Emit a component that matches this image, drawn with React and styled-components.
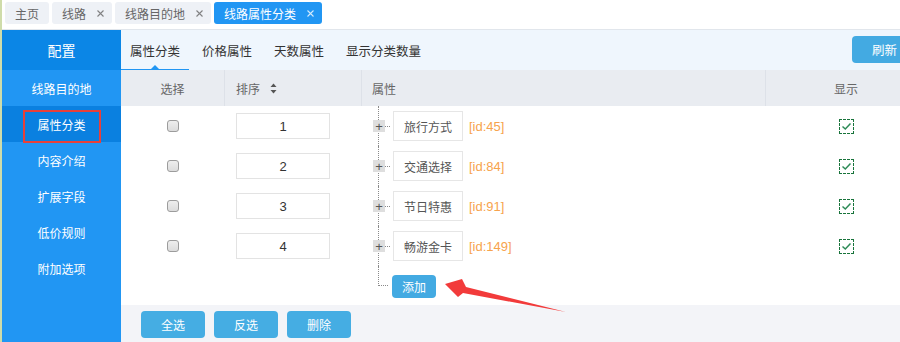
import React from "react";
import styled, { createGlobalStyle } from "styled-components";

const GlobalStyle = createGlobalStyle`
  html, body {
    margin: 0;
    padding: 0;
    background: #fff;
    overflow: hidden;
  }
  body {
    font-family: "Noto Sans CJK SC", "Noto Sans", sans-serif;
    font-size: 12px;
    color: #333;
  }
  * { box-sizing: border-box; }
`;

const tabs = [
  { label: "主页", closable: false },
  { label: "线路", closable: true },
  { label: "线路目的地", closable: true },
  { label: "线路属性分类", closable: true, active: true },
];

const menu = ["线路目的地", "属性分类", "内容介绍", "扩展字段", "低价规则", "附加选项"];
const subTabs = ["属性分类", "价格属性", "天数属性", "显示分类数量"];

const rows = [
  { sort: 1, name: "旅行方式", id: 45 },
  { sort: 2, name: "交通选择", id: 84 },
  { sort: 3, name: "节日特惠", id: 91 },
  { sort: 4, name: "畅游金卡", id: 149 },
];

const App = () => {
  return (
    <Page>
      <GlobalStyle />
      <TabBar>
        {tabs.map((t) => (
          <Tab key={t.label} $active={t.active} $closable={t.closable}>
            {t.label}
            {t.closable && (
              <Close viewBox="0 0 7 7">
                <path d="M0.5 0.5 L6.5 6.5 M6.5 0.5 L0.5 6.5" stroke="currentColor" strokeWidth="1.1" />
              </Close>
            )}
          </Tab>
        ))}
      </TabBar>

      <Body>
        <Sidebar>
          <SideHeader>配置</SideHeader>
          {menu.map((m) => (
            <SideItem key={m} $active={m === "属性分类"}>
              {m === "属性分类" ? <Marked>{m}</Marked> : m}
            </SideItem>
          ))}
        </Sidebar>

        <Main>
          <SubBar>
            {subTabs.map((s, i) => (
              <SubTab key={s} $active={i === 0}>
                {s}
              </SubTab>
            ))}
            <RefreshButton>刷新</RefreshButton>
          </SubBar>

          <Table>
            <HeadCell $center>选择</HeadCell>
            <HeadCell $pad={11}>
              排序
              <SortIcon viewBox="0 0 7 11">
                <path d="M3.5 0.5 L6.5 4 H0.5 Z" fill="#555" />
                <path d="M3.5 10.5 L6.5 7 H0.5 Z" fill="#555" />
              </SortIcon>
            </HeadCell>
            <HeadCell $pad={10}>属性</HeadCell>
            <HeadCell $center $last>
              显示
            </HeadCell>

            {rows.map((r) => (
              <React.Fragment key={r.id}>
                <Cell $center>
                  <Check type="checkbox" />
                </Cell>
                <Cell $pad={11}>
                  <SortInput defaultValue={r.sort} />
                </Cell>
                <TreeCell>
                  <Branch>
                    <PlusBox>+</PlusBox>
                    <Twig />
                    <AttrLabel>{r.name}</AttrLabel>
                    <AttrId>[id:{r.id}]</AttrId>
                  </Branch>
                </TreeCell>
                <Cell $center>
                  <ShowMark>
                    <svg width="11" height="9" viewBox="0 0 11 9">
                      <path d="M1.5 4.5 L4.3 7 L9.5 1.5" fill="none" stroke="#2e8b57" strokeWidth="1.5" />
                    </svg>
                  </ShowMark>
                </Cell>
              </React.Fragment>
            ))}

            <Cell />
            <Cell />
            <AddCell>
              <Elbow />
              <AddButton>添加</AddButton>
            </AddCell>
            <Cell />
          </Table>

          <Footer>
            <FootButton>全选</FootButton>
            <FootButton>反选</FootButton>
            <FootButton>删除</FootButton>
          </Footer>
        </Main>
      </Body>

      <Arrow viewBox="0 0 926 342">
        <polygon
          points="445,284 462,279 466,287 566,312 463,293 458,297"
          fill="#f23b3b"
        />
      </Arrow>
    </Page>
  );
};

const Page = styled.div`
  position: relative;
  width: 926px;
  height: 342px;
  border-left: 2px solid #cfdcaa;
  display: flex;
  flex-direction: column;
`;

const TabBar = styled.div`
  height: 30px;
  display: flex;
  align-items: flex-start;
  gap: 3px;
  padding: 2px 0 0 3px;
  border-bottom: 1px solid #e1e6ec;
`;

const Tab = styled.div`
  height: 22px;
  display: flex;
  align-items: center;
  padding: 0 ${({ $closable }) => ($closable ? 8 : 10)}px 0 10px;
  border-radius: 3px;
  font-size: 12px;
  color: ${({ $active }) => ($active ? "#fff" : "#666")};
  background: ${({ $active }) => ($active ? "#2196f3" : "#eef1f6")};
`;

const Close = styled.svg`
  width: 7px;
  height: 7px;
  margin-left: 11px;
  opacity: 0.8;
`;

const Body = styled.div`
  flex: 1;
  display: flex;
  min-height: 0;
`;

const Sidebar = styled.div`
  width: 119px;
  background: #2196f3;
  display: flex;
  flex-direction: column;
`;

const SideHeader = styled.div`
  height: 40px;
  display: flex;
  align-items: center;
  justify-content: center;
  background: #0b86e6;
  color: #fff;
  font-size: 14px;
`;

const SideItem = styled.div`
  height: 36px;
  display: flex;
  align-items: center;
  justify-content: center;
  color: #fff;
  font-size: 12px;
  background: ${({ $active }) => ($active ? "#0a80e0" : "transparent")};
`;

const Marked = styled.span`
  width: 78px;
  height: 33px;
  margin-top: 4px;
  display: flex;
  align-items: center;
  justify-content: center;
  padding-bottom: 4px;
  border: 2px solid #e8403a;
`;

const Main = styled.div`
  flex: 1;
  display: flex;
  flex-direction: column;
`;

const SubBar = styled.div`
  height: 40px;
  display: flex;
  align-items: stretch;
  gap: 4px;
  background: #eff6fd;
`;

const SubTab = styled.div`
  position: relative;
  display: flex;
  align-items: center;
  padding: 1px 9px 0;
  font-size: 12.5px;
  color: #333;
  border-bottom: 1px solid ${({ $active }) => ($active ? "#2196f3" : "transparent")};

  &::after {
    content: "";
    display: ${({ $active }) => ($active ? "block" : "none")};
    position: absolute;
    left: 50%;
    bottom: 0;
    margin-left: -4px;
    border: 4px solid transparent;
    border-bottom-color: #2196f3;
  }
`;

const RefreshButton = styled.div`
  margin: 6px 12px 7px auto;
  width: 62px;
  display: flex;
  align-items: center;
  padding-left: 20px;
  border-radius: 4px;
  background: #43aae2;
  color: #fff;
  font-size: 12.5px;
`;

const Table = styled.div`
  display: grid;
  grid-template-columns: 104px 137px 404px 1fr;
  grid-template-rows: 36px repeat(4, 40px) 39px;
  background: #fff;
`;

const HeadCell = styled.div`
  display: flex;
  align-items: center;
  justify-content: ${({ $center }) => ($center ? "center" : "flex-start")};
  padding-left: ${({ $pad }) => ($pad || 0)}px;
  background: #e9ecf1;
  color: #666;
  font-size: 12px;
  border-right: ${({ $last }) => ($last ? "none" : "1px solid #dde1e8")};
`;

const SortIcon = styled.svg`
  width: 7px;
  height: 11px;
  margin-left: 10px;
`;

const Cell = styled.div`
  display: flex;
  align-items: center;
  justify-content: ${({ $center }) => ($center ? "center" : "flex-start")};
  padding-left: ${({ $pad }) => ($pad || 0)}px;
`;

const Check = styled.input`
  appearance: none;
  margin: 0;
  width: 12px;
  height: 12px;
  border: 1px solid #9c9c9c;
  border-radius: 3px;
  background: linear-gradient(#eee, #dcdcdc);
`;

const SortInput = styled.input`
  width: 94px;
  height: 26px;
  border: 1px solid #e3e3e3;
  text-align: center;
  font-family: "Liberation Sans", "Noto Sans", sans-serif;
  font-size: 13px;
  color: #333;
  outline: none;
`;

const TreeCell = styled.div`
  padding-left: 16px;
  display: flex;
`;

const Branch = styled.div`
  flex: 1;
  display: flex;
  align-items: center;
  border-left: 1px dotted #8a8a8a;
`;

const PlusBox = styled.span`
  width: 12px;
  height: 12px;
  margin-left: -6px;
  display: flex;
  align-items: center;
  justify-content: center;
  background: #dedede;
  color: #555;
  font-family: "Liberation Sans", sans-serif;
  font-size: 13px;
  line-height: 1;
`;

const Twig = styled.span`
  width: 5px;
  border-top: 1px dotted #8a8a8a;
`;

const AttrLabel = styled.span`
  width: 70px;
  height: 30px;
  margin-left: 3px;
  display: flex;
  align-items: center;
  justify-content: center;
  border: 1px solid #e6e6e6;
  color: #555;
  font-size: 12px;
`;

const AttrId = styled.span`
  margin-left: 6px;
  color: #f7a34c;
  font-family: "Liberation Sans", sans-serif;
  font-size: 13px;
`;

const ShowMark = styled.span`
  width: 15px;
  height: 15px;
  display: flex;
  align-items: center;
  justify-content: center;
  border: 1px dashed #17733a;
`;

const AddCell = styled.div`
  padding-left: 16px;
  display: flex;
  align-items: flex-start;
`;

const Elbow = styled.span`
  width: 10px;
  height: 20px;
  border-left: 1px dotted #8a8a8a;
  border-bottom: 1px dotted #8a8a8a;
`;

const AddButton = styled.div`
  margin: 9px 0 0 4px;
  width: 44px;
  height: 23px;
  display: flex;
  align-items: center;
  justify-content: center;
  border-radius: 4px;
  background: #43aae2;
  color: #fff;
  font-size: 12px;
`;

const Footer = styled.div`
  flex: 1;
  display: flex;
  align-items: flex-start;
  gap: 9px;
  padding: 6px 0 0 20px;
  background: #f3f4f8;
`;

const FootButton = styled.div`
  width: 64px;
  height: 27px;
  display: flex;
  align-items: center;
  justify-content: center;
  border-radius: 4px;
  background: #45ade3;
  color: #fff;
  font-size: 12px;
`;

const Arrow = styled.svg`
  position: absolute;
  left: -2px;
  top: 0;
  width: 926px;
  height: 342px;
  pointer-events: none;
`;

export default App;
